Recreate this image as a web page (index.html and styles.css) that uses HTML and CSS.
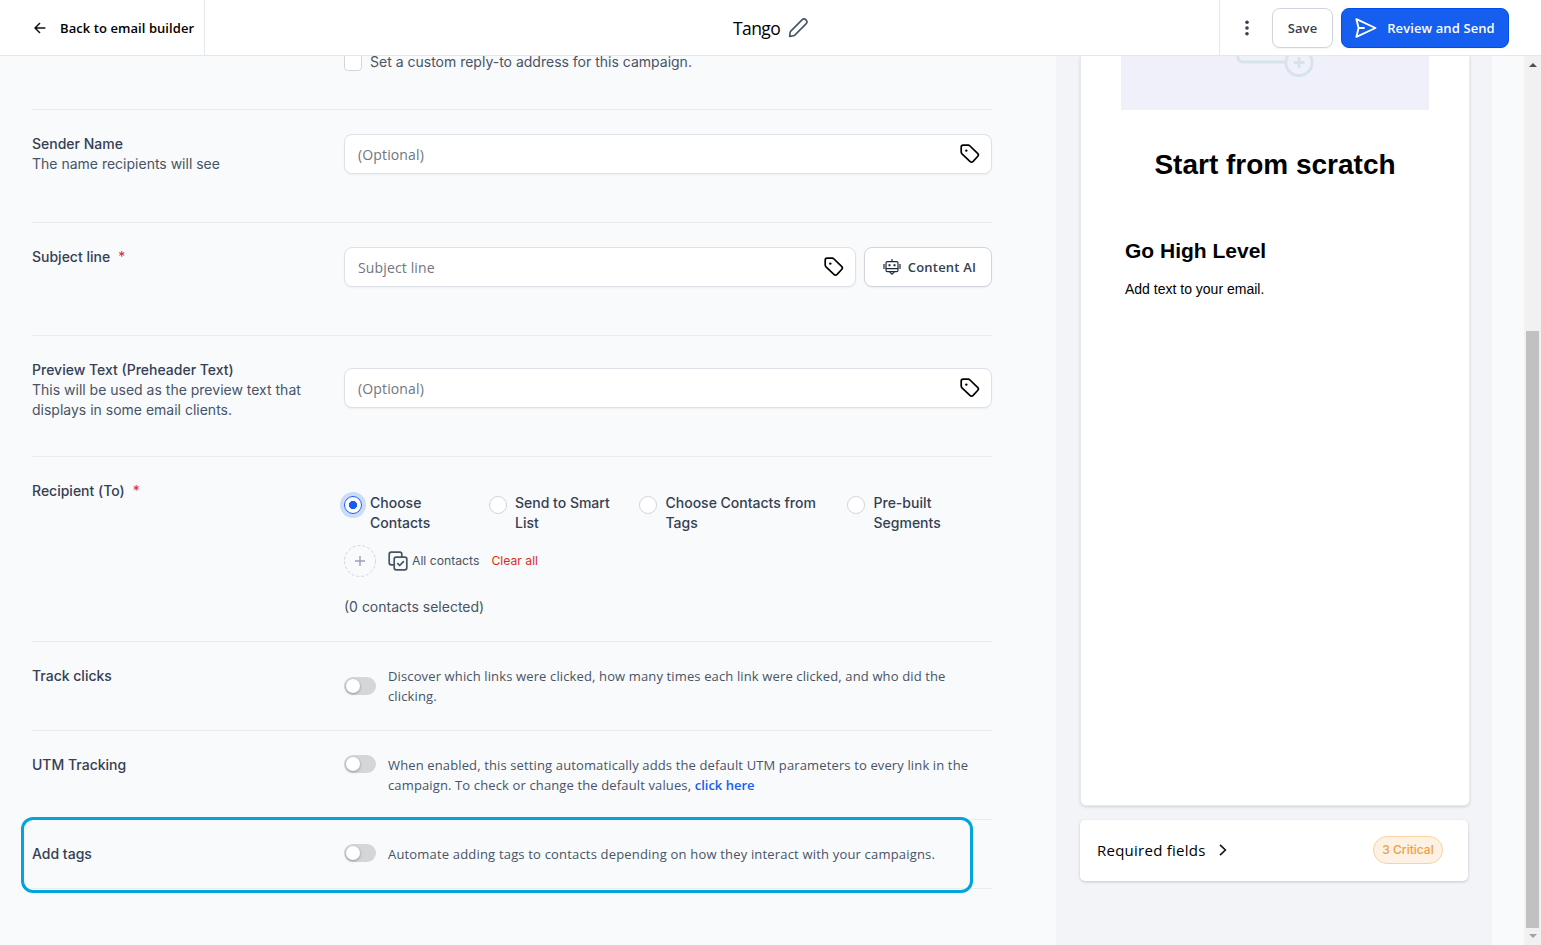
FILE: index.html
```html
<!DOCTYPE html>
<html lang="en">
<head>
<meta charset="utf-8">
<title>Tango</title>
<link rel="stylesheet" href="styles.css">
</head>
<body>
<svg class="defs" width="0" height="0">
  <symbol id="tag" viewBox="0 0 20 20"><path d="M1.2 3.2Q1.2 1.2 3.2 1.2H8.2Q9.2 1.2 10 2L17.6 9.300Q19.200 10.900 17.600 12.500L13.100 17.300Q11.500 18.900 9.900 17.300L2 9.9Q1.2 9.1 1.2 8.1Z" fill="none" stroke="currentColor" stroke-width="1.7" stroke-linejoin="round"/><circle cx="6.3" cy="6.6" r="1.2" fill="currentColor"/></symbol>
</svg>
<header class="topbar">
  <div class="back">
    <svg width="12" height="12" viewBox="0 0 12 12" fill="none" stroke="#111" stroke-width="1.5"><path d="M11.4 6H1.2M6 1 1 6l5 5"/></svg>
    <span class="ui semi back-text">Back to email builder</span>
  </div>
  <div class="title">
    <span class="ui title-text">Tango</span>
    <svg width="20" height="20" viewBox="0 0 20 20" fill="none" stroke="#475467" stroke-width="1.6" stroke-linejoin="round"><path d="M1.6 18.4 2.2 14.2Q2.3 13.6 2.8 13.1L14 1.9a2.7 2.7 0 0 1 4 4L6.8 17.1Q6.3 17.6 5.7 17.7Z"/></svg>
  </div>
  <div class="actions">
    <svg class="dots" width="4" height="16" viewBox="0 0 4 16" fill="#344054"><circle cx="2" cy="2.2" r="1.8"/><circle cx="2" cy="8" r="1.8"/><circle cx="2" cy="13.8" r="1.8"/></svg>
    <button class="btn save ui semi">Save</button>
    <button class="btn primary ui semi"><svg width="22" height="20" viewBox="0 0 22 20" fill="none" stroke="#fff" stroke-width="1.9" stroke-linejoin="round" stroke-linecap="round"><path d="M1.4 1.2 20.4 10 1.4 18.8 3.6 10ZM3.6 10H9"/></svg><span>Review and Send</span></button>
  </div>
</header>
<div class="body">
  <main class="form">
    <section class="row row-reply">
      <div></div>
      <label class="check"><span class="box"></span>Set a custom reply-to address for this campaign.</label>
    </section>
    <section class="row row-field">
      <div class="label"><b>Sender Name</b><p>The name recipients will see</p></div>
      <div class="input ui"><span>(Optional)</span><svg width="20" height="20"><use href="#tag"/></svg></div>
    </section>
    <section class="row row-field">
      <div class="label"><b>Subject line</b><i>*</i></div>
      <div class="pair">
        <div class="input ui"><span>Subject line</span><svg width="20" height="20"><use href="#tag"/></svg></div>
        <button class="btn ai ui semi"><svg width="18" height="16" viewBox="0 0 18 16" fill="none" stroke="#1d2939" stroke-width="1.2"><rect x="3" y="2.7" width="12" height="10" rx="1.5"/><path d="M9 0v2.7M3 9.600h12M1 5v5M17 5v5M6.6 12.9 9 15.2l2.400-2.300"/><path d="M6.5 5.2v2M11.5 5.2v2" stroke-width="2"/></svg><span>Content AI</span></button>
      </div>
    </section>
    <section class="row row-preview">
      <div class="label"><b>Preview Text (Preheader Text)</b><p>This will be used as the preview text that displays in some email clients.</p></div>
      <div class="input ui"><span>(Optional)</span><svg width="20" height="20"><use href="#tag"/></svg></div>
    </section>
    <section class="row row-recipient">
      <div class="label"><b>Recipient (To)</b><i>*</i></div>
      <div class="recipient">
        <div class="radios">
          <label><span class="radio on"></span><span>Choose<br>Contacts</span></label>
          <label><span class="radio"></span><span>Send to Smart<br>List</span></label>
          <label><span class="radio"></span><span>Choose Contacts from<br>Tags</span></label>
          <label><span class="radio"></span><span>Pre-built<br>Segments</span></label>
        </div>
        <div class="pick">
          <svg width="32" height="32" viewBox="0 0 32 32" fill="none"><circle cx="16" cy="16" r="15.5" stroke="#d0d5dd" stroke-dasharray="3 2"/><path d="M16 11v10M11 16h10" stroke="#98a2b3" stroke-width="1.4"/></svg>
          <svg class="all-icon" width="20" height="20" viewBox="0 0 20 20" fill="none" stroke="#475467" stroke-width="1.7" stroke-linecap="round" stroke-linejoin="round"><path d="M6.2 13.8H3.2a2 2 0 0 1-2-2V3.2a2 2 0 0 1 2-2h8.6a2 2 0 0 1 2 2v3"/><rect x="6.2" y="6.2" width="12.6" height="12.6" rx="2"/><path d="m9.8 12.6 1.9 1.9 3.7-3.8"/></svg>
          <span>All contacts</span><span class="clear">Clear all</span>
        </div>
        <div class="count">(0 contacts selected)</div>
      </div>
    </section>
    <section class="row row-toggle">
      <div class="label"><b>Track clicks</b></div>
      <div class="setting center"><span class="toggle"></span><p class="ui desc">Discover which links were clicked, how many times each link were clicked, and who did the<br>clicking.</p></div>
    </section>
    <section class="row row-toggle">
      <div class="label"><b>UTM Tracking</b></div>
      <div class="setting"><span class="toggle"></span><p class="ui desc">When enabled, this setting automatically adds the default UTM parameters to every link in the<br>campaign. To check or change the default values, <a>click here</a></p></div>
    </section>
    <section class="row row-tags">
      <div class="label"><b>Add tags</b></div>
      <div class="setting"><span class="toggle"></span><p class="ui desc tags-desc">Automate adding tags to contacts depending on how they interact with your campaigns.</p></div>
      <div class="highlight"></div>
    </section>
  </main>
  <aside class="side">
    <div class="email">
      <div class="hero"><svg width="308" height="54" viewBox="0 0 308 54" fill="none" stroke="#d5e4eb" stroke-width="2.8"><path d="M117 -3v4q0 5 5 5h42.500"/><circle cx="178" cy="6.500" r="13.200"/><path d="M178 1v11M172.500 6.500h11"/></svg></div>
      <h1>Start from scratch</h1>
      <h2>Go High Level</h2>
      <p>Add text to your email.</p>
    </div>
    <div class="required">
      <span class="ui req-text">Required fields</span>
      <svg width="8" height="12" viewBox="0 0 8 12" fill="none" stroke="#111" stroke-width="1.6"><path d="m1 .8 5.400 5.200L1 11.200"/></svg>
      <span class="badge">3 Critical</span>
    </div>
  </aside>
  <div class="gutter"></div>
  <div class="scroll"><i class="up"></i><div class="thumb"></div><i class="down"></i></div>
</div>
</body>
</html>
```
FILE: styles.css
```css
* { box-sizing: border-box; }
body { margin: 0; height: 945px; overflow: hidden; display: flex; flex-direction: column; background: #f9fafb; font: 14px/20px Inter, sans-serif; color: #475467; }
p { margin: 0; }
.defs { position: absolute; }
.ui { font-family: "Open Sans", "Noto Sans", sans-serif; }
.semi { font-weight: 600; }

.topbar { position: relative; z-index: 1; height: 56px; flex: none; background: #fff; border-bottom: 1px solid #e4e7ec; display: grid; grid-template-columns: 205px 1fr 322px; color: #000; }
.back { display: flex; align-items: center; gap: 14px; padding-left: 34px; border-right: 1px solid #e4e7ec; white-space: nowrap; }
.back-text { font-size: 13px; letter-spacing: .07px; }
.title { display: flex; align-items: center; gap: 8px; padding: 0 0 0 528px; }
.title-text { font-size: 17.500px; letter-spacing: -.6px; }
.actions { display: flex; align-items: center; padding-left: 25px; border-left: 1px solid #e4e7ec; }
.dots { margin-right: 23px; }
.btn { height: 40px; border: 1px solid #d0d5dd; border-radius: 8px; background: #fff; color: #344054; font-size: 13px; line-height: 20px; padding: 0; display: flex; align-items: center; justify-content: center; box-shadow: 0 1px 2px #1018280d; white-space: nowrap; }
.save { width: 61px; margin-right: 8px; letter-spacing: .1px; }
.primary { width: 168px; background: #155eef; border-color: #004eeb; color: #fff; gap: 10px; letter-spacing: .1px; }

.body { flex: 1; min-height: 0; display: grid; grid-template-columns: 1056px 436px 32px 17px; }
.form { padding: 0 64px 0 32px; }
.row { display: grid; grid-template-columns: 312px 648px; align-items: start; padding-top: 24px; border-bottom: 1px solid #eaecf0; }
.row-reply { height: 54px; padding-top: 0; }
.check { display: flex; gap: 8px; line-height: 12px; }
.box { width: 18px; height: 18px; margin-top: -3px; border: 1px solid #d0d5dd; border-radius: 4px; background: #fff; }
.row-field { height: 113px; }
.row-preview { height: 121px; }
.row-preview .input { margin-top: 8px; }
.row-recipient { height: 185px; }
.row-toggle { height: 89px; }
.row-tags { height: 69px; position: relative; }
.label b { font-weight: 500; color: #344054; }
.label i { font-style: normal; color: #d92d20; margin-left: 8px; }
.label p { max-width: 290px; }
.input { height: 40px; border: 1px solid #dfe1e8; border-radius: 8px; background: #fff; box-shadow: 0 1px 2px #1018280d; display: flex; align-items: center; justify-content: space-between; padding: 2px 11px 0 13px; color: #70757f; font-size: 14px; letter-spacing: .14px; }
.input svg { color: #000; margin-top: -2px; }
.pair { display: grid; grid-template-columns: 512px 128px; gap: 8px; }
.ai { gap: 7px; padding-left: 3px; letter-spacing: .2px; }

.recipient { padding-top: 12px; }
.radios { display: grid; grid-template-columns: 145px 150px 208px 1fr; color: #344054; font-weight: 500; }
.radios label { display: flex; gap: 8px; white-space: nowrap; }
.radios label:nth-child(n+3) { gap: 8.500px; }
.radio { flex: none; width: 18px; height: 18px; margin-top: 3px; border: 1px solid #d0d5dd; border-radius: 50%; background: #fff; }
.radio.on { border-color: #155eef; background: radial-gradient(circle, #155eef 3.8px, #fff 4.4px); box-shadow: 0 0 0 4px #155eef33; }
.pick { display: flex; align-items: center; height: 32px; margin-top: 12px; font-size: 12.200px; }
.all-icon { margin: 0 4px 0 12px; }
.clear { color: #d92d20; margin-left: 12px; }
.count { margin-top: 20px; }

.setting { display: flex; gap: 12px; }
.center { align-items: center; }
.toggle { flex: none; width: 32px; height: 18px; padding: 2px; border-radius: 9px; background: #d5d6d8; }
.toggle::before { content: ""; display: block; width: 14px; height: 14px; border-radius: 50%; background: #fff; box-shadow: 0 1px 3px #0005; }
.desc { font-size: 13px; letter-spacing: .13px; white-space: nowrap; }
.tags-desc { letter-spacing: .18px; }
.desc a { color: #155eef; font-weight: 600; letter-spacing: 0; }
.highlight { position: absolute; left: -11px; top: -3px; width: 952px; height: 76px; border: 3px solid #00a5dc; border-radius: 12px; }

.side { background: #f2f4f7; padding-left: 24px; }
.email { width: 390px; height: 750px; background: #fff; border: 1px solid #e8eaee; border-top: 0; border-radius: 0 0 6px 6px; box-shadow: 0 1px 3px #10182826; padding: 0 40px; color: #000; font-family: "Liberation Sans", Arial, sans-serif; }
.hero { height: 54px; background: #f0f0fa; }
.hero svg { display: block; }
.email h1 { margin: 38px 0 0; font-size: 28px; line-height: 34px; text-align: center; white-space: nowrap; }
.email h2 { margin: 56px 0 0 4px; font-size: 21px; line-height: 26px; }
.email p { margin: 15px 0 0 4px; font-size: 14px; line-height: 20px; }
.required { width: 388px; height: 61px; margin-top: 14px; padding: 0 25px 2px 17px; border-radius: 5px; background: #fff; box-shadow: 0 1px 3px #10182833; display: flex; align-items: center; color: #000; }
.req-text { font-size: 15px; font-weight: 500; letter-spacing: .25px; margin-right: 13px; }
.badge { margin-left: auto; width: 70px; height: 28px; border: 1px solid #f8d49f; border-radius: 14px; background: #fdf1e3; color: #f0a03c; font-size: 12px; font-weight: 500; line-height: 26px; text-align: center; }
.scroll { background: #f1f1f1; display: flex; flex-direction: column; align-items: center; }
.up, .down { border: 4px solid transparent; width: 0; height: 0; }
.up { border-top: 0; border-bottom-color: #505050; margin-top: 7px; }
.down { border-bottom: 0; border-top-color: #a3a3a3; margin-top: 6px; }
.thumb { width: 13px; height: 597px; margin-top: 264px; background: #c1c1c1; }
```
